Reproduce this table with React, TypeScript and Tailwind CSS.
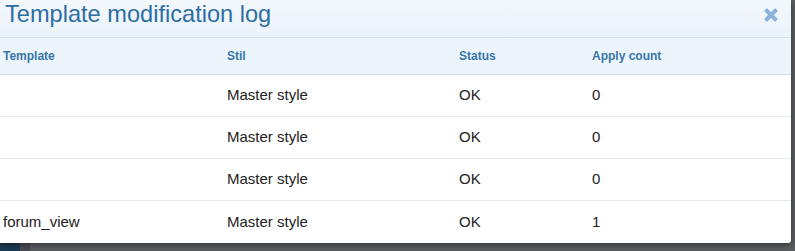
import React from "react";

const rows = [
  { template: "", style: "Master style", status: "OK", count: "0" },
  { template: "", style: "Master style", status: "OK", count: "0" },
  { template: "", style: "Master style", status: "OK", count: "0" },
  { template: "forum_view", style: "Master style", status: "OK", count: "1" },
];

const cols = "grid grid-cols-[224px_232px_133px_1fr] pl-[3px]";

export default function App() {
  return (
    <div
      className="w-[795px] h-[251px] overflow-hidden bg-[#5b5d60] relative"
      style={{ fontFamily: '"Liberation Sans", Arial, sans-serif' }}
    >
      {/* page underneath the overlay */}
      <div className="absolute left-0 bottom-0 w-[20px] h-[9px] bg-[#1d3a55]" />
      <div className="absolute left-[20px] bottom-0 w-[10px] h-[9px] bg-[#4a4d51]" />

      <div className="relative w-[791px] bg-white rounded-br-[3px] shadow-[0_2px_6px_rgba(0,0,0,0.45)]">
        <div className="flex items-center justify-between h-[38px] bg-gradient-to-b from-[#f3f8fc] to-[#ebf3fa] border-b border-[#d3e1ee] pl-[5px] pr-[12px]">
          <h2 className="text-[23.6px] leading-none text-[#2d6ea3] -mt-[7px]">Template modification log</h2>
          <svg width="16" height="16" viewBox="0 0 16 16" className="-mt-[7px]">
            <path d="M2.5 2.5 L13.5 13.5 M13.5 2.5 L2.5 13.5" stroke="#8db4d8" strokeWidth="4" strokeLinecap="butt" />
          </svg>
        </div>
        <div className={`${cols} h-[37px] items-center bg-[#edf5fc] border-b border-[#d5dbe1] text-[12px] font-bold text-[#3775a8]`}>
          <div>Template</div>
          <div>Stil</div>
          <div>Status</div>
          <div>Apply count</div>
        </div>
        {rows.map((r, i) => (
          <div
            key={i}
            className={`${cols} h-[42px] items-center text-[15px] text-[#222] ${i < rows.length - 1 ? "border-b border-[#e6e8ea]" : ""}`}
          >
            <div>{r.template}</div>
            <div>{r.style}</div>
            <div>{r.status}</div>
            <div>{r.count}</div>
          </div>
        ))}
      </div>
    </div>
  );
}
